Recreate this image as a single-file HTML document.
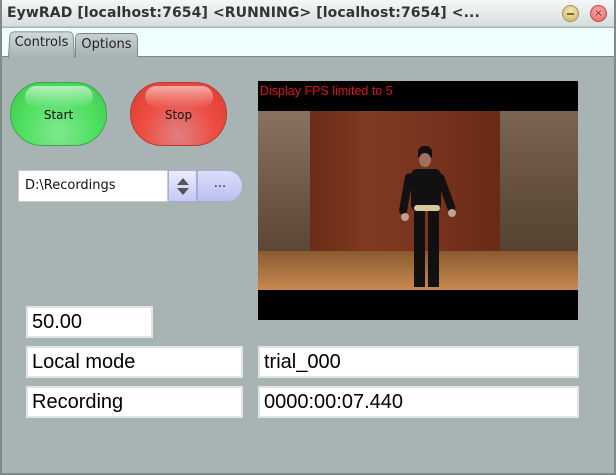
<!DOCTYPE html>
<html><head><meta charset="utf-8"><style>
*{margin:0;padding:0;box-sizing:border-box}
body{width:616px;height:475px;overflow:hidden;background:#a8b3b3;font-family:"DejaVu Sans","Liberation Sans",sans-serif;position:relative}
.abs{position:absolute}
#frame{left:0;top:0;width:616px;height:475px;border:2px solid #7f8a8a;border-top:none}
#title{left:0;top:0;width:616px;height:27px;background:linear-gradient(#f4f8f8,#d6dddd);border-bottom:1px solid #c0c8c8}
#title span{position:absolute;left:7px;top:5px;font-size:14px;font-weight:bold;color:#333;white-space:nowrap;letter-spacing:0.1px}
.wb{top:5px;width:17px;height:17px;border-radius:50%;}
#tabs{left:2px;top:28px;width:612px;height:29px;background:#effefe;border-bottom:1px solid #7c8787}
.tab{top:31px;height:26px;background:linear-gradient(#c6d0d0,#a8b3b3);border:1px solid #7c8787;border-bottom:none;border-radius:5px 5px 0 0;font-size:13px;color:#222;padding:5px 0 0 0;text-align:center}
.btn{border-radius:32px;font-size:12px;color:#111;text-align:center;line-height:64px}
.field{background:#fff;border:2px solid #e0e4e4;font-family:"Liberation Sans",sans-serif;font-size:20px;color:#000;padding-left:4px;line-height:28px}
.dk{background:#111}
</style></head><body>
<div class="abs" id="title"><span>EywRAD [localhost:7654] &lt;RUNNING&gt; [localhost:7654] &lt;...</span></div>
<div class="abs wb" style="left:562px;background:radial-gradient(circle at 50% 35%,#f0e6b0,#c9b66a);border:1px solid #a89850"><div class="abs" style="left:4px;top:7px;width:7px;height:2px;background:#7a6a30"></div></div>
<div class="abs wb" style="left:590px;background:radial-gradient(circle at 50% 35%,#ffb0b0,#e06060);border:1px solid #c05050;color:#902020;font-size:10px;text-align:center;line-height:15px">×</div>
<div class="abs" id="tabs"></div>
<div class="abs tab" style="left:8px;width:67px;top:30px;height:28px;background:linear-gradient(#d0dada,#a8b3b3);border-bottom:none;transform:perspective(40px) rotateX(4deg);transform-origin:bottom"></div>
<div class="abs" style="left:8px;top:35px;width:67px;text-align:center;font-size:13px;color:#222">Controls</div>
<div class="abs tab" style="left:75px;width:63px;top:33px;height:24px;padding-top:3px">Options</div>
<div class="abs" id="frame"></div>

<div class="abs btn" style="left:10px;top:82px;width:97px;height:64px;background:radial-gradient(ellipse at 50% 80%,#7fe890 0%,#4fe060 55%,#3cc84c 100%);border:1px solid #3aa84a;">
<div class="abs" style="left:14px;top:3px;width:68px;height:22px;border-radius:14px;background:linear-gradient(rgba(255,255,255,.6),rgba(255,255,255,0))"></div><span style="position:relative">Start</span></div>
<div class="abs btn" style="left:130px;top:82px;width:97px;height:64px;background:radial-gradient(ellipse at 50% 85%,#e08080 0%,#ee4c40 55%,#d83c34 100%);border:1px solid #b83a32;">
<div class="abs" style="left:14px;top:3px;width:68px;height:22px;border-radius:14px;background:linear-gradient(rgba(255,255,255,.55),rgba(255,255,255,0))"></div><span style="position:relative">Stop</span></div>

<div class="abs" style="left:18px;top:170px;width:150px;height:32px;background:#fff;border:1px solid #c8cccc;font-size:13px;color:#111;padding:7px 0 0 6px">D:\Recordings</div>
<div class="abs" style="left:168px;top:170px;width:29px;height:32px;background:linear-gradient(#ecedff,#c4c8f4);border:1px solid #a8aad8">
<div class="abs" style="left:8px;top:7px;width:0;height:0;border-left:6px solid transparent;border-right:6px solid transparent;border-bottom:7px solid #555"></div>
<div class="abs" style="left:8px;top:17px;width:0;height:0;border-left:6px solid transparent;border-right:6px solid transparent;border-top:7px solid #555"></div></div>
<div class="abs" style="left:197px;top:170px;width:46px;height:32px;background:linear-gradient(#dcdefc,#bcc0f0);border:1px solid #a8aad8;border-radius:0 16px 16px 0;text-align:center;font-size:13px;line-height:26px;color:#222">...</div>

<div class="abs" style="left:258px;top:81px;width:320px;height:239px;background:#000;overflow:hidden">
<div class="abs" style="left:2px;top:3px;font-family:'Liberation Sans',sans-serif;font-size:12.5px;color:#e01020;white-space:nowrap">Display FPS limited to 5</div>
<div class="abs" style="left:0;top:30px;width:320px;height:179px;background:#6a5040">
<div class="abs" style="left:0;top:0;width:52px;height:145px;background:linear-gradient(#8a7260,#5a4434)"></div>
<div class="abs" style="left:52px;top:0;width:190px;height:145px;background:linear-gradient(90deg,#6a2c18,#803a20 30%,#7a3420 60%,#6a2a16)"></div>
<div class="abs" style="left:242px;top:0;width:78px;height:145px;background:linear-gradient(#7a6454,#54402e)"></div>
<div class="abs" style="left:0;top:140px;width:320px;height:39px;background:linear-gradient(#8a5a30,#c88a50)"></div>
<div class="abs dk" style="left:160px;top:35px;width:14px;height:12px;border-radius:6px 6px 2px 2px"></div>
<div class="abs" style="left:161px;top:42px;width:12px;height:14px;background:#a07060;border-radius:50%"></div>
<div class="abs dk" style="left:153px;top:58px;width:30px;height:42px;border-radius:6px"></div>
<div class="abs dk" style="left:144px;top:62px;width:8px;height:42px;border-radius:4px;transform:rotate(10deg)"></div>
<div class="abs dk" style="left:184px;top:62px;width:8px;height:40px;border-radius:4px;transform:rotate(-20deg)"></div>
<div class="abs" style="left:143px;top:102px;width:8px;height:8px;background:#c0a090;border-radius:50%"></div>
<div class="abs" style="left:190px;top:98px;width:8px;height:8px;background:#c0a090;border-radius:50%"></div>
<div class="abs" style="left:156px;top:94px;width:26px;height:6px;background:#d8c8a0;border-radius:3px"></div>
<div class="abs dk" style="left:156px;top:100px;width:11px;height:76px"></div>
<div class="abs dk" style="left:170px;top:100px;width:11px;height:76px"></div>
</div>
</div>

<div class="abs field" style="left:26px;top:306px;width:127px;height:32px">50.00</div>
<div class="abs field" style="left:26px;top:346px;width:217px;height:32px">Local mode</div>
<div class="abs field" style="left:258px;top:346px;width:321px;height:32px">trial_000</div>
<div class="abs field" style="left:26px;top:386px;width:217px;height:32px">Recording</div>
<div class="abs field" style="left:258px;top:386px;width:321px;height:32px">0000:00:07.440</div>
</body></html>
